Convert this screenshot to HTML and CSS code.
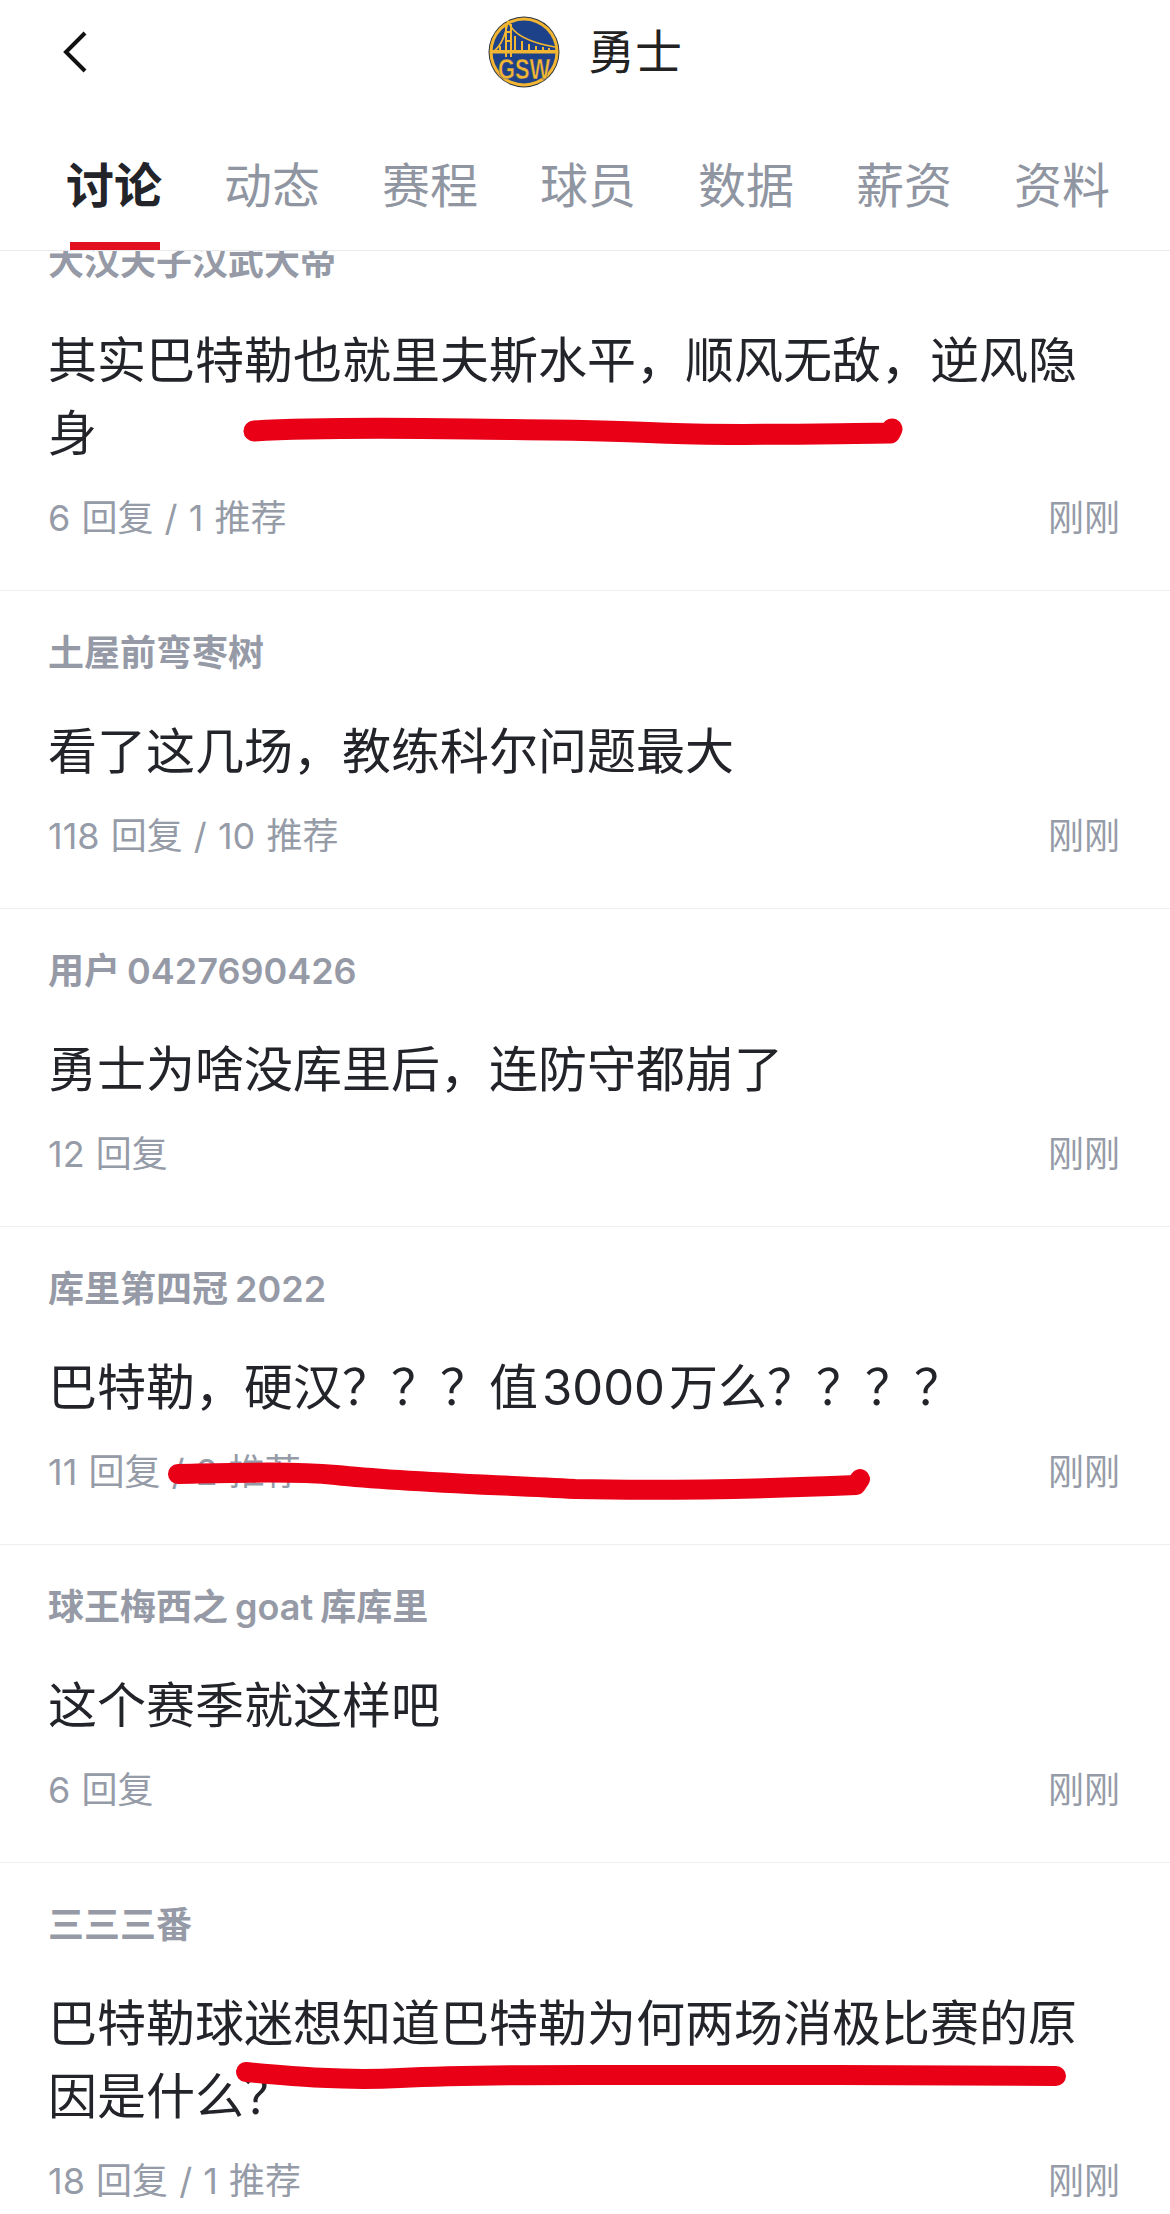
FILE: index.html
```html
<!DOCTYPE html>
<html lang="zh-CN">
<head>
  <meta charset="UTF-8" />
  <meta name="viewport" content="width=device-width, initial-scale=1.0" />
  <title>勇士</title>
  <link rel="stylesheet" href="styles.css">
</head>
<body>
  <div class="page">
    <header class="topbar">
      <div class="back">
        <svg width="24" height="42" viewBox="0 0 24 42"><path d="M22 2 L3 21 L22 40" fill="none" stroke="#111" stroke-width="4" /></svg>
      </div>
      <div class="team">
        <svg class="logo" width="72" height="72" viewBox="0 0 72 72">
          <circle cx="36" cy="36" r="35.5" fill="#2a3442" />
          <circle cx="36" cy="36" r="34.5" fill="#f2b632" />
          <circle cx="36" cy="36" r="31.5" fill="#1d4289" />
          <path d="M5 36 Q16 28 20 5 Q26 24 67 31" fill="none" stroke="#f2b632" stroke-width="1.6" />
          <path d="M27 20 V35 M34 25 V35 M41 28 V35 M48 30 V35 M55 31 V35 M61 32 V35 M12 30 V35" stroke="#f2b632" stroke-width="2" />
          <path d="M18 8 V41 M23 8 V41 M18 16 H23 M18 25 H23" fill="none" stroke="#f2b632" stroke-width="2" />
          <rect x="3" y="34" width="66" height="3.5" fill="#f2b632" />
          <text class="logo-text" transform="translate(36 63) scale(0.75 1)" text-anchor="middle">GSW</text>
        </svg>
        <span class="team-name">勇士</span>
      </div>
      <div></div>
    </header>

    <nav class="tabs">
      <span class="tab active">讨论</span>
      <span class="tab">动态</span>
      <span class="tab">赛程</span>
      <span class="tab">球员</span>
      <span class="tab">数据</span>
      <span class="tab">薪资</span>
      <span class="tab">资料</span>
    </nav>

    <div class="list">
      <div class="post first">
        <div class="post-name">大汉天子汉武大帝</div>
        <div class="post-title">其实巴特勒也就里夫斯水平，顺风无敌，逆风隐身</div>
        <div class="post-meta"><span>6 回复 / 1 推荐</span><span>刚刚</span></div>
      </div>
      <div class="post">
        <div class="post-name">土屋前弯枣树</div>
        <div class="post-title">看了这几场，教练科尔问题最大</div>
        <div class="post-meta"><span>118 回复 / 10 推荐</span><span>刚刚</span></div>
      </div>
      <div class="post">
        <div class="post-name">用户 0427690426</div>
        <div class="post-title">勇士为啥没库里后，连防守都崩了</div>
        <div class="post-meta"><span>12 回复</span><span>刚刚</span></div>
      </div>
      <div class="post">
        <div class="post-name">库里第四冠 2022</div>
        <div class="post-title">巴特勒，硬汉？？？值<span class="num">3000</span>万么？？？？</div>
        <div class="post-meta"><span>11 回复 / 2 推荐</span><span>刚刚</span></div>
      </div>
      <div class="post">
        <div class="post-name">球王梅西之 goat 库库里</div>
        <div class="post-title">这个赛季就这样吧</div>
        <div class="post-meta"><span>6 回复</span><span>刚刚</span></div>
      </div>
      <div class="post">
        <div class="post-name">三三三番</div>
        <div class="post-title">巴特勒球迷想知道巴特勒为何两场消极比赛的原因是什么？</div>
        <div class="post-meta"><span>18 回复 / 1 推荐</span><span>刚刚</span></div>
      </div>
    </div>

    <!-- hand drawn red marks on top of the screenshot -->
    <svg class="marks" width="1170" height="2214" viewBox="0 0 1170 2214">
      <path d="M254 431 C320 427 400 428 470 429 C560 430 610 430 660 433 C720 436 800 434 890 433 L892 429" stroke-width="21" />
      <path d="M178 1474 C230 1473 290 1471 336 1475 C400 1482 480 1484 575 1489 C660 1491 760 1489 856 1485 L860 1479" stroke-width="20" />
      <path d="M246 2072 C290 2076 340 2081 400 2078 C480 2074 560 2075 650 2075 C780 2075 930 2075 1056 2076" stroke-width="20" />
    </svg>
  </div>
</body>
</html>
```

FILE: styles.css
```css
* {
  margin: 0;
  padding: 0;
  box-sizing: border-box;
  font-family: 'Inter', 'Noto Sans CJK SC', sans-serif;
}
html, body {
  height: 2214px;
  overflow: hidden;
  background: #fff;
}
.page {
  position: relative;
  width: 1170px;
  height: 2214px;
  display: flex;
  flex-direction: column;
  overflow: hidden;
}
.topbar {
  display: grid;
  grid-template-columns: 1fr auto 1fr;
  align-items: center;
  height: 104px;
}
.back {
  padding-left: 63px;
  display: flex;
  align-items: center;
}
.team {
  display: flex;
  align-items: center;
  gap: 28px;
}
.logo-text {
  font-family: 'Liberation Sans', sans-serif;
  font-size: 29px;
  font-weight: bold;
  fill: #f2b632;
  stroke: #1d4289;
  stroke-width: 0.5px;
}
.team-name {
  font-size: 47px;
  line-height: 66px;
  color: #222;
}
.tabs {
  display: flex;
  gap: 62px;
  padding: 49px 0 31px 66px;
  border-bottom: 1px solid #e8e9eb;
}
.tab {
  position: relative;
  font-size: 48px;
  line-height: 66px;
  color: #8f95a1;
}
.tab.active {
  color: #22242a;
  font-weight: bold;
}
.tab.active::after {
  content: "";
  position: absolute;
  left: 4px;
  bottom: -31px;
  width: 90px;
  height: 8px;
  background: #e3101f;
}
.list {
  flex: 1;
  overflow: hidden;
}
.post {
  padding: 37px 48px 48px;
  border-bottom: 1px solid #eceef0;
}
.post.first {
  margin-top: -51px;
}
.post-name {
  font-size: 36px;
  line-height: 50px;
  font-weight: 600;
  word-spacing: -2px;
  color: #959aa6;
}
.post-title {
  margin-top: 37px;
  font-size: 49px;
  line-height: 73px;
  color: #22242a;
}
.post-title .num {
  margin: 0 4px;
}
.post-meta {
  display: flex;
  justify-content: space-between;
  margin-top: 24px;
  padding-right: 2px;
  font-size: 36px;
  line-height: 48px;
  word-spacing: 1px;
  color: #969ba8;
}
.marks {
  position: absolute;
  top: 0;
  left: 0;
  pointer-events: none;
}
.marks path {
  fill: none;
  stroke: #e90016;
  stroke-linecap: round;
  stroke-linejoin: round;
}
```
